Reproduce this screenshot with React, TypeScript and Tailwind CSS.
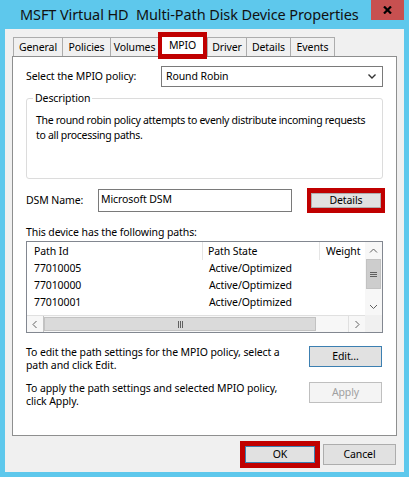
import React from 'react'

const tabs = [
  { label: 'General', cls: 'w-[49px] border-l border-t' },
  { label: 'Policies', cls: 'w-[48px] border-l border-t' },
  { label: 'Volumes', cls: 'w-[48px] border-l border-t' },
  { label: 'MPIO', cls: 'selected' },
  { label: 'Driver', cls: 'w-[39px] border-l border-t' },
  { label: 'Details', cls: 'w-[44px] border-l border-t' },
  { label: 'Events', cls: 'w-[45px] border-l border-t border-r' },
]

const paths = ['77010005', '77010000', '77010001', '77010002']

function Chevron({ d, w = 9, h = 6 }: { d: string; w?: number; h?: number }) {
  return (
    <svg width={w} height={h} viewBox={`0 0 ${w} ${h}`} fill="none">
      <path d={d} stroke="#606060" strokeWidth="1" />
    </svg>
  )
}

export default function App() {
  return (
    <div className="w-[409px] h-[477px] bg-[#5ec8ec] flex flex-col font-['Noto_Sans',sans-serif] text-[10.5px] tracking-[-0.1px] leading-[15px] text-black">
      {/* title bar */}
      <div className="h-[29px] flex justify-between shrink-0">
        <div className="pl-[20px] pt-[4px] text-[14.5px] leading-[20px] whitespace-pre text-[#111]">
          MSFT Virtual HD  Multi-Path Disk Device Properties
        </div>
        <div className="mr-[5px] w-[33px] h-[20px] bg-[#c75050] flex items-center justify-center">
          <svg width="9" height="8" viewBox="0 0 9 8">
            <path d="M1 0.5 L8 7.5 M8 0.5 L1 7.5" stroke="#000" strokeWidth="2.2" />
          </svg>
        </div>
      </div>

      <div className="mx-[5px] mb-[5px] flex-1 bg-[#f0f0f0] flex flex-col">
        {/* tabs */}
        <div className="flex items-end pl-[8px] mt-[3px] -mb-[3px] relative z-10">
          {tabs.map(t =>
            t.cls === 'selected' ? (
              <div
                key={t.label}
                className="w-[49px] h-[27px] border-x-[4px] border-y-[5px] border-[#c00000] bg-white flex items-center justify-center"
              >
                {t.label}
              </div>
            ) : (
              <div
                key={t.label}
                className={`${t.cls} h-[19px] mb-[3px] border-[#acacac] bg-[#f0f0f0] flex items-center justify-center`}
              >
                {t.label}
              </div>
            )
          )}
        </div>

        {/* tab panel */}
        <div className="mx-[7px] h-[380px] border border-[#8e8f8f] bg-white pt-[9px] px-[13px] flex flex-col">
          <div className="flex items-center h-[21px]">
            <span>Select the MPIO policy:</span>
            <div className="ml-auto w-[222px] h-[21px] border border-[#7a7a7a] flex items-center pl-[4px] pr-[6px]">
              <span>Round Robin</span>
              <svg className="ml-auto" width="8" height="5" viewBox="0 0 8 5" fill="none">
                <path d="M0.5 0.5 L4 4 L7.5 0.5" stroke="#333" strokeWidth="1.4" />
              </svg>
            </div>
          </div>

          <fieldset className="mt-[4px] h-[88px] border border-[#dcdcdc] rounded-[3px] px-[9px] pt-[8px]">
            <legend className="-ml-[3px] px-[2px] leading-[14px]">Description</legend>
            <p className="whitespace-nowrap tracking-[-0.3px]">
              The round robin policy attempts to evenly distribute incoming requests
              <br />
              to all processing paths.
            </p>
          </fieldset>

          <div className="flex items-center mt-[9px]">
            <span className="w-[72px]">DSM Name:</span>
            <div className="w-[194px] h-[23px] border border-[#7a7a7a] px-[2px] leading-[16px] pt-[1px]">
              Microsoft DSM
            </div>
            <div className="ml-auto -mr-[2px] w-[78px] h-[25px] border-x-[4px] border-y-[5px] border-[#c00000]">
              <div className="h-full bg-[#e1e1e1] border border-[#adadad] flex items-center justify-center leading-[13px]">
                Details
              </div>
            </div>
          </div>

          <div className="mt-[12px]">This device has the following paths:</div>

          {/* list view */}
          <div className="mt-[1px] h-[92px] border border-[#828790] grid grid-cols-[1fr_17px] grid-rows-[1fr_17px]">
            <div className="overflow-hidden">
              <div className="flex h-[18px] items-center">
                <div className="w-[176px] h-full pl-[7px] border-r border-[#e5e5e5] flex items-center">Path Id</div>
                <div className="w-[117px] h-full pl-[5px] border-r border-[#e5e5e5] flex items-center">Path State</div>
                <div className="flex-1 h-full pl-[6px] flex items-center">Weight</div>
              </div>
              {paths.map(p => (
                <div key={p} className="flex h-[17px] items-center">
                  <div className="w-[176px] pl-[7px]">{p}</div>
                  <div className="w-[117px] pl-[6px]">Active/Optimized</div>
                </div>
              ))}
            </div>

            {/* vertical scrollbar */}
            <div className="flex flex-col bg-[#f7f7f7]">
              <div className="h-[17px] flex items-center justify-center">
                <Chevron d="M1 4.5 L4.5 1 L8 4.5" />
              </div>
              <div className="h-[30px] mx-[1px] bg-[#cdcdcd] border border-[#c2c2c2] flex items-center justify-center">
                <svg width="7" height="7" viewBox="0 0 7 7">
                  <path d="M0 1.5 H7 M0 3.5 H7 M0 5.5 H7" stroke="#606060" strokeWidth="1" />
                </svg>
              </div>
              <div className="flex-1" />
              <div className="h-[17px] flex items-center justify-center">
                <Chevron d="M1 1 L4.5 4.5 L8 1" />
              </div>
            </div>

            {/* horizontal scrollbar */}
            <div className="flex bg-[#f7f7f7] border-t border-[#e0e0e0]">
              <div className="w-[17px] flex items-center justify-center border-r border-[#c2c2c2]">
                <Chevron d="M4.5 1 L1 4.5 L4.5 8" w={6} h={9} />
              </div>
              <div className="w-[272px] my-[1px] bg-[#dadada] border border-[#c2c2c2] flex items-center justify-center">
                <svg width="7" height="7" viewBox="0 0 7 7">
                  <path d="M1.5 0 V7 M3.5 0 V7 M5.5 0 V7" stroke="#606060" strokeWidth="1" />
                </svg>
              </div>
              <div className="flex-1" />
              <div className="w-[17px] flex items-center justify-center border-l border-[#e0e0e0]">
                <Chevron d="M1.5 1 L5 4.5 L1.5 8" w={6} h={9} />
              </div>
            </div>
            <div className="bg-[#f0f0f0]" />
          </div>

          <div className="flex items-start mt-[13px]">
            <p className="leading-[13px] whitespace-nowrap">
              To edit the path settings for the MPIO policy, select a
              <br />
              path and click Edit.
            </p>
            <div className="ml-auto mr-[1px] w-[73px] h-[21px] bg-[#e1e1e1] border border-[#3c7fb1] flex items-center justify-center">
              Edit...
            </div>
          </div>

          <div className="flex items-start mt-[10px]">
            <p className="leading-[13px] whitespace-nowrap">
              To apply the path settings and selected MPIO policy,
              <br />
              click Apply.
            </p>
            <div className="ml-auto mr-[1px] w-[73px] h-[21px] bg-[#f4f4f4] border border-[#bfbfbf] text-[#a0a0a0] flex items-center justify-center">
              Apply
            </div>
          </div>
        </div>

        {/* dialog buttons */}
        <div className="flex justify-end items-center mt-[5px] pr-[8px] gap-[3px]">
          <div className="w-[80px] h-[27px] border-[5px] border-[#c00000]">
            <div className="h-full bg-[#e1e1e1] border border-[#3c7fb1] flex items-center justify-center">OK</div>
          </div>
          <div className="w-[73px] h-[21px] bg-[#e1e1e1] border border-[#adadad] flex items-center justify-center">
            Cancel
          </div>
        </div>
      </div>
    </div>
  )
}
